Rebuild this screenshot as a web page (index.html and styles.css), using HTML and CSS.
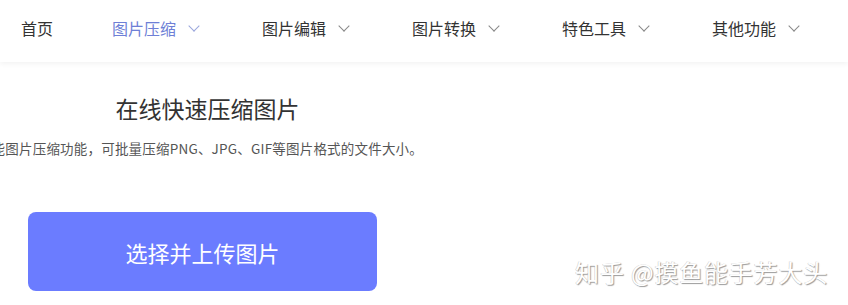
FILE: index.html
```html
<!DOCTYPE html>
<html lang="zh-CN">
<head>
    <meta charset="UTF-8">
    <meta name="viewport" content="width=device-width, initial-scale=1.0">
    <title>在线快速压缩图片</title>
    <link rel="stylesheet" href="styles.css">
</head>
<body>

<header class="nav">
    <a class="nav-item nav-home">首页</a>
    <a class="nav-item nav-drop active">图片压缩 <span class="chev"></span></a>
    <a class="nav-item nav-drop">图片编辑 <span class="chev"></span></a>
    <a class="nav-item nav-drop">图片转换 <span class="chev"></span></a>
    <a class="nav-item nav-drop">特色工具 <span class="chev"></span></a>
    <a class="nav-item nav-drop">其他功能 <span class="chev"></span></a>
</header>

<section class="main">
    <div class="column">
        <h1 class="title">在线快速压缩图片</h1>
        <div class="desc-row">
            <p class="desc">智能图片压缩功能，可批量压缩PNG、JPG、GIF等图片格式的文件大小。</p>
        </div>
        <button class="upload-btn">选择并上传图片</button>
    </div>
</section>

<div class="watermark">知乎 @摸鱼能手芳大头</div>

</body>
</html>
```

FILE: styles.css
```css
body {
    font-family: "Noto Sans CJK SC", "Noto Sans", "Liberation Sans", sans-serif;
    background-color: #ffffff;
    margin: 0;
    padding: 0;
    width: 848px;
    height: 305px;
    overflow: hidden;
    position: relative;
}
.nav {
    display: flex;
    align-items: center;
    height: 62px;
    padding-left: 21px;
    box-shadow: 0 2px 5px rgba(0,0,0,0.05);
}
.nav-item {
    display: flex;
    align-items: center;
    flex-shrink: 0;
    font-size: 16px;
    color: #333;
    line-height: 20px;
    margin-top: -6px;
}
.nav-home {
    width: 91px;
}
.nav-drop {
    width: 150px;
}
.nav-item.active {
    color: #6e7fd6;
}
.chev {
    display: inline-block;
    width: 7px;
    height: 7px;
    border-right: 1px solid #888;
    border-bottom: 1px solid #888;
    transform: rotate(45deg);
    margin-left: 14px;
    margin-top: -5px;
}
.active .chev {
    border-color: #9aa6dc;
}
.main {
    padding-top: 30px;
}
.column {
    width: 415px;
    display: flex;
    flex-direction: column;
    align-items: center;
}
.title {
    margin: 0;
    font-size: 23px;
    font-weight: normal;
    color: #333;
    line-height: 32px;
}
.desc-row {
    align-self: flex-start;
    width: 423px;
    display: flex;
    justify-content: flex-end;
    margin-top: 15px;
}
.desc {
    margin: 0;
    white-space: nowrap;
    font-size: 13.5px;
    letter-spacing: 0.2px;
    color: #555;
    line-height: 18px;
    flex-shrink: 0;
}
.upload-btn {
    margin-top: 55px;
    align-self: flex-start;
    margin-left: 28px;
    width: 349px;
    height: 79px;
    border: none;
    border-radius: 8px;
    background-color: #6b7cff;
    color: #fff;
    font-family: inherit;
    font-size: 22px;
}
.watermark {
    position: absolute;
    right: 20px;
    top: 254px;
    font-size: 24px;
    letter-spacing: 0.8px;
    color: #fff;
    text-shadow: 1px 1px 1px #999, -0.5px -0.5px 0 #ccc;
}
```
